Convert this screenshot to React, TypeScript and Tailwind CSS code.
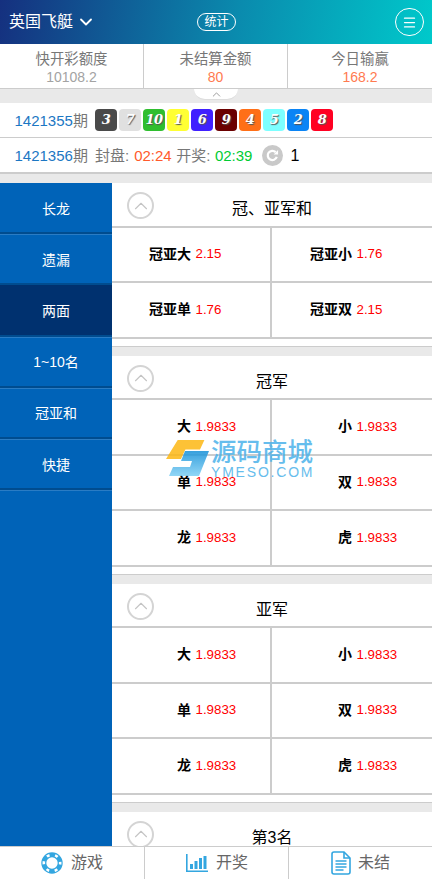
import { ChevronDown, ChevronUp, Menu } from 'lucide-react'

const FONT = "font-['Liberation_Sans','Noto_Sans_CJK_SC',sans-serif]"

const balls = [
    { n: 3, bg: 'bg-[#4a4a4a]' },
    { n: 7, bg: 'bg-[#e0e0e0]' },
    { n: 10, bg: 'bg-[#2fbe2f]' },
    { n: 1, bg: 'bg-[#ffff33]' },
    { n: 6, bg: 'bg-[#4020ff]' },
    { n: 9, bg: 'bg-[#6b0000]' },
    { n: 4, bg: 'bg-[#ff6f17]' },
    { n: 5, bg: 'bg-[#7dffff]' },
    { n: 2, bg: 'bg-[#0a84f5]' },
    { n: 8, bg: 'bg-[#ff0022]' },
]

const sideItems = ['长龙', '遗漏', '两面', '1~10名', '冠亚和', '快捷']

const bigSmall = [
    ['大', '1.9833', '小', '1.9833'],
    ['单', '1.9833', '双', '1.9833'],
    ['龙', '1.9833', '虎', '1.9833'],
]

const Cell = ({ name, odds }: { name: string; odds: string }) => (
    <div className="flex-1 flex items-center">
        <b className="w-1/2 text-right font-bold text-[14px] text-black">{name}</b>
        <span className="pl-[4.500px] text-[#ff0000] text-[13.300px]">{odds}</span>
    </div>
)

const Section = ({ title, rows }: { title: string; rows: string[][] }) => (
    <section className="bg-white border-b border-[#cccccc] mb-[9px]">
        <div className="relative h-[42.5px] flex items-center justify-center text-[16px] text-black">
            <span className="absolute left-[15px] top-[9px] w-[27px] h-[27px] rounded-full border-2 border-[#d4d4d4] flex items-center justify-center">
                <ChevronUp size={22} strokeWidth={1.2} className="text-[#c4c4c4]" />
            </span>
            <span className="pt-[10px]">{title}</span>
        </div>
        {rows.map((row, i) => (
            <div key={i} className="flex h-[55.5px] border-t-2 border-[#cccccc]">
                <div className="w-[160px] flex border-r-[2px] border-[#cccccc]">
                    <Cell name={row[0]} odds={row[1]} />
                </div>
                <div className="flex-1 flex">
                    <Cell name={row[2]} odds={row[3]} />
                </div>
            </div>
        ))}
        {rows.length > 0 && <div className="h-[9px] border-t-2 border-[#cccccc]" />}
    </section>
)

const App = () => {
    return (
        <div className={`relative w-[432px] h-[879px] overflow-hidden flex flex-col bg-[#e9e9e9] ${FONT}`}>
            {/* header */}
            <header className="relative h-[44px] shrink-0 flex items-center justify-between pl-[9px] pr-[8px] text-white bg-[linear-gradient(100deg,#15307f_0%,#0a8bae_55%,#00c9cb_100%)]">
                <div className="flex items-center text-[16px]">
                    英国飞艇
                    <ChevronDown size={20} strokeWidth={2.2} className="ml-[3px]" />
                </div>
                <span className="absolute left-[197px] top-[13px] w-[39px] h-[18px] rounded-full border border-white flex items-center justify-center text-[12px]">
                    统计
                </span>
                <span className="w-[29px] h-[28px] rounded-full border border-white flex items-center justify-center">
                    <Menu size={15} strokeWidth={2} />
                </span>
            </header>

            {/* stats */}
            <div className="h-[45px] shrink-0 grid grid-cols-[144px_144px_1fr] bg-white border-b border-[#cccccc] text-center text-[14.4px] leading-[18px]">
                <div className="text-[#777777] pt-[6px] border-r border-[#cccccc]">
                    <p>快开彩额度</p>
                    <p className="text-[14px] text-[#a3a3a3]">10108.2</p>
                </div>
                <div className="text-[#777777] pt-[6px] border-r border-[#cccccc]">
                    <p>未结算金额</p>
                    <p className="text-[14px] text-[#ff7a50]">80</p>
                </div>
                <div className="text-[#777777] pt-[6px]">
                    <p>今日输赢</p>
                    <p className="text-[14px] text-[#ff7a50]">168.2</p>
                </div>
            </div>

            {/* collapse tab */}
            <div className="h-[14px] shrink-0 flex justify-center">
                <div className="w-[44px] h-[11px] bg-white rounded-b-[12px] border-b border-[#dddddd] flex items-center justify-center">
                    <ChevronUp size={13} strokeWidth={1.5} className="text-[#888888]" />
                </div>
            </div>

            {/* last draw */}
            <div className="h-[35px] shrink-0 flex items-center bg-white border-b border-[#cccccc] pl-[14.500px] text-[15px]">
                <span className="w-[80.500px] pt-[2px]">
                    <span className="text-[#1c77c3]">1421355</span>
                    <span className="text-[#777777]">期</span>
                </span>
                <div className="flex gap-[2px]">
                    {balls.map(b => (
                        <span
                            key={b.n}
                            className={`w-[22px] h-[22px] rounded-[4px] flex items-center justify-center text-white text-[13px] font-bold italic font-['DejaVu_Serif',serif] tracking-[-0.5px] [text-shadow:1px_1px_1px_#555] ${b.bg}`}
                        >
                            {b.n}
                        </span>
                    ))}
                </div>
            </div>

            {/* next draw */}
            <div className="h-[36px] shrink-0 flex items-center bg-white border-b-[2px] border-[#cccccc] pl-[14.500px] pt-[2px] text-[15px] text-[#777777]">
                <span className="w-[80.500px]">
                    <span className="text-[#1c77c3]">1421356</span>期
                </span>
                <span>封盘:</span>
                <span className="ml-[5px] text-[#ff5a2c]">02:24</span>
                <span className="ml-[4.500px]">开奖:</span>
                <span className="ml-[4.500px] text-[#00cc33]">02:39</span>
                <span className="ml-[10px] -mt-[2px] w-[21px] h-[21px] rounded-full bg-[#c9c9c9] flex items-center justify-center">
                    <svg width="13" height="13" viewBox="0 0 14 14" fill="none" stroke="#ffffff" strokeWidth="2.4">
                        <path d="M11.6 8.6A5 5 0 1 1 10.4 3.4" />
                        <path d="M13 1.2V6H8.2Z" fill="#ffffff" stroke="none" />
                    </svg>
                </span>
                <span className="ml-[7px] text-[16px] text-black">1</span>
            </div>

            {/* body */}
            <div className="flex-1 min-h-0 flex mt-[9px]">
                <nav className="w-[112px] shrink-0 bg-[#0063b8]">
                    {sideItems.map(item => (
                        <div
                            key={item}
                            className={`h-[51.2px] pt-[3px] flex items-center justify-center text-[14px] text-white border-b-2 border-[#004c8f] shadow-[0_1px_0_#2a7cc4] ${item === '两面' ? 'bg-[#00316f]' : ''}`}
                        >
                            {item}
                        </div>
                    ))}
                </nav>
                <main className="flex-1 min-w-0 overflow-hidden">
                    <Section
                        title="冠、亚军和"
                        rows={[
                            ['冠亚大', '2.15', '冠亚小', '1.76'],
                            ['冠亚单', '1.76', '冠亚双', '2.15'],
                        ]}
                    />
                    <Section title="冠军" rows={bigSmall} />
                    <Section title="亚军" rows={bigSmall} />
                    <Section title="第3名" rows={[]} />
                </main>
            </div>

            {/* bottom nav */}
            <footer className="h-[33px] shrink-0 grid grid-cols-[145px_144px_1fr] bg-white border-t border-[#cccccc] text-[16px] text-[#666666]">
                <div className="flex items-center justify-center gap-[8px] border-r border-[#cccccc]">
                    <svg width="22" height="22" viewBox="0 0 22 22">
                        <circle cx="11" cy="11" r="8.2" fill="none" stroke="#33a6e0" strokeWidth="5" />
                        <circle cx="11" cy="11" r="8.2" fill="none" stroke="#ffffff" strokeWidth="2.6" strokeDasharray="3 5.6" strokeDashoffset="1.5" />
                    </svg>
                    游戏
                </div>
                <div className="flex items-center justify-center gap-[7px] border-r border-[#cccccc]">
                    <svg width="24" height="20" viewBox="0 0 24 20" fill="#33a6e0">
                        <path d="M1 1h1.6v16.4H23V19H1Z" />
                        <rect x="5" y="11" width="3" height="5" />
                        <rect x="9.500" y="8" width="3" height="8" />
                        <rect x="14" y="5" width="3" height="11" />
                        <rect x="18.500" y="3" width="3" height="13" />
                    </svg>
                    开奖
                </div>
                <div className="flex items-center justify-center gap-[7px]">
                    <svg width="20" height="24" viewBox="0 0 20 24" fill="none" stroke="#33a6e0" strokeWidth="1.6">
                        <path d="M3 1h10l6 6v14a2 2 0 0 1-2 2H3a2 2 0 0 1-2-2V3a2 2 0 0 1 2-2Z" />
                        <path d="M13 1v6h6" />
                        <path d="M4.500 10h11M4.500 13h11M4.500 16h11M4.500 19h8" />
                    </svg>
                    未结
                </div>
            </footer>

            {/* watermark */}
            <div className="absolute left-[166px] top-[439px] flex items-start opacity-85 pointer-events-none">
                <svg width="45" height="38" viewBox="0 0 45 38" className="mt-[1px]">
                    <defs>
                        <linearGradient id="sBlue" x1="0" y1="0" x2="0" y2="1">
                            <stop offset="0" stopColor="#1590d8" />
                            <stop offset="1" stopColor="#7fd0f5" />
                        </linearGradient>
                    </defs>
                    <path d="M11.700 0H38.400L34 9.500H19.400L15 19H0Z" fill="#fdb813" />
                    <path d="M19 11H43L33 36H3L7 27H24L26 21H15Z" fill="url(#sBlue)" />
                </svg>
                <div className="flex flex-col text-[#4cb2ea]">
                    <span className="text-[25.500px] leading-[27px] font-medium">源码商城</span>
                    <span className="text-[14px] leading-[12px] tracking-[1.800px]">YMESO.COM</span>
                </div>
            </div>
        </div>
    )
}

export default App
